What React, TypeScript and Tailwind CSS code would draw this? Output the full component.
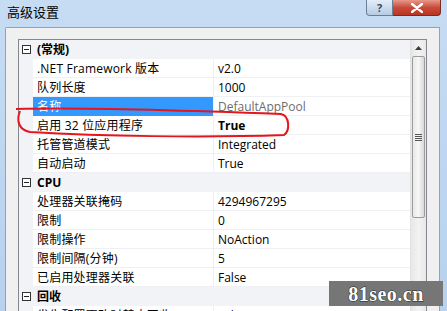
import React from "react";

type Row =
  | { kind: "cat"; label: string }
  | { kind: "prop"; name: string; value: string; selected?: boolean; readOnly?: boolean; bold?: boolean };

const rows: Row[] = [
  { kind: "cat", label: "(常规)" },
  { kind: "prop", name: ".NET Framework 版本", value: "v2.0" },
  { kind: "prop", name: "队列长度", value: "1000" },
  { kind: "prop", name: "名称", value: "DefaultAppPool", selected: true, readOnly: true },
  { kind: "prop", name: "启用 32 位应用程序", value: "True", bold: true },
  { kind: "prop", name: "托管管道模式", value: "Integrated" },
  { kind: "prop", name: "自动启动", value: "True" },
  { kind: "cat", label: "CPU" },
  { kind: "prop", name: "处理器关联掩码", value: "4294967295" },
  { kind: "prop", name: "限制", value: "0" },
  { kind: "prop", name: "限制操作", value: "NoAction" },
  { kind: "prop", name: "限制间隔(分钟)", value: "5" },
  { kind: "prop", name: "已启用处理器关联", value: "False" },
  { kind: "cat", label: "回收" },
  { kind: "prop", name: "发生配置更改时禁止回收", value: "False" },
];

const font = { fontFamily: '"Open Sans", "Noto Sans CJK SC", sans-serif' };

function Expander() {
  return (
    <span className="relative w-[9px] h-[9px] border border-[#333] bg-white flex-none">
      <span className="absolute left-[1px] right-[1px] top-[3px] h-px bg-[#222]" />
    </span>
  );
}

function GridRow({ row }: { row: Row }) {
  if (row.kind === "cat") {
    return (
      <div className="flex items-center h-[19px] bg-[#f1f3f7]">
        <div className="w-[14px] flex justify-center pl-[1px]">
          <Expander />
        </div>
        <span className="pl-[4px] pt-px font-bold text-[12px] text-black">{row.label}</span>
      </div>
    );
  }
  return (
    <div className="flex h-[19px]">
      <div className="w-[14px] bg-[#f1f3f7] flex-none" />
      <div
        className={
          row.selected
            ? "w-[180px] flex-none bg-[#3399ff] text-white pl-[4px] pt-px flex items-center text-[12px]"
            : "w-[180px] flex-none border-b border-[#eef0f3] pl-[4px] pt-px flex items-center text-[12px] text-black"
        }
      >
        <span className="whitespace-nowrap tracking-[0.2px]">{row.name}</span>
      </div>
      <div className="w-px bg-[#eef0f3] flex-none" />
      <div
        className={
          "flex-1 border-b border-[#eef0f3] pl-[4px] pt-px flex items-center text-[12px] whitespace-nowrap " +
          (row.readOnly ? "text-[#6d6d6d]" : "text-black") +
          (row.bold ? " font-bold" : "")
        }
      >
        {row.value}
      </div>
    </div>
  );
}

function Scrollbar() {
  return (
    <div className="w-[16px] flex-none flex flex-col bg-gradient-to-r from-[#e7e7e7] via-[#f3f3f3] to-[#e7e7e7] border-l border-[#e2e2e2]">
      <div className="h-[16px] flex items-center justify-center">
        <svg width="7" height="4" viewBox="0 0 7 4">
          <path d="M0 4 L3.5 0 L7 4 Z" fill="#3b3b3b" />
        </svg>
      </div>
      <div className="mx-[1px] h-[162px] rounded-[2px] border border-[#9b9b9b] bg-gradient-to-r from-[#e9e9e9] via-[#f7f7f7] to-[#d8d8d8] flex flex-col items-center justify-center gap-[1px]">
        <span className="w-[7px] h-px bg-[#555]" />
        <span className="w-[7px] h-px bg-[#555]" />
        <span className="w-[7px] h-px bg-[#555]" />
        <span className="w-[7px] h-px bg-[#555]" />
      </div>
    </div>
  );
}

export default function App() {
  return (
    <div
      className="relative w-[447px] h-[311px] overflow-hidden flex flex-col bg-gradient-to-b from-[#c6dcf3] to-[#b7d1ee]"
      style={font}
    >
      <div className="h-[27px] flex flex-none">
        <span className="pl-[7px] pt-[3px] text-[13px] text-black">高级设置</span>
        <div className="ml-auto mr-[6px] flex h-[16px]">
          <div className="w-[27px] rounded-bl-[4px] border border-t-0 border-[#6d7d93] bg-gradient-to-b from-[#e3edf8] to-[#b6cbe3] flex items-center justify-center text-[11px] text-[#3a4a60] font-bold leading-none">
            ?
          </div>
          <div className="w-[48px] rounded-br-[4px] border border-t-0 border-l-0 border-[#7a2a22] bg-gradient-to-b from-[#e6988b] via-[#c94a38] to-[#b83522] flex items-center justify-center">
            <svg width="12" height="10" viewBox="0 0 12 10">
              <path d="M1 1 L11 9 M11 1 L1 9" stroke="#fff" strokeWidth="2.4" strokeLinecap="round" />
            </svg>
          </div>
        </div>
      </div>

      <div className="flex-1 pl-[5px] pr-[7px] flex">
        <div className="flex-1 bg-[#f0f0f0] border border-[#8fa2b8] border-b-0 rounded-tl-[2px] pl-[12px] pr-[12px] pt-[11px] flex">
          <div className="flex-1 border border-[#828790] border-b-0 bg-white flex">
            <div className="flex-1 flex flex-col">
              {rows.map((r, i) => (
                <GridRow key={i} row={r} />
              ))}
            </div>
            <Scrollbar />
          </div>
        </div>
      </div>

      <svg className="absolute left-0 top-0 pointer-events-none" width="447" height="311">
        <path
          d="M16 109 C 90 107, 200 111, 281 114 C 290 116, 290 131, 284 135 C 200 138, 100 136, 30 132 C 19 130, 16 121, 20 111"
          fill="none"
          stroke="#e5141d"
          strokeWidth="2"
        />
      </svg>

      <div className="absolute left-[329px] top-[281px] w-[114px] h-[25px] bg-[#767676] flex items-center justify-center">
        <span
          className="text-[20px] font-bold text-white tracking-[0.5px]"
          style={{ fontFamily: '"Liberation Serif", serif', WebkitTextStroke: "1px #222", paintOrder: "stroke fill" }}
        >
          81seo.cn
        </span>
      </div>
    </div>
  );
}
